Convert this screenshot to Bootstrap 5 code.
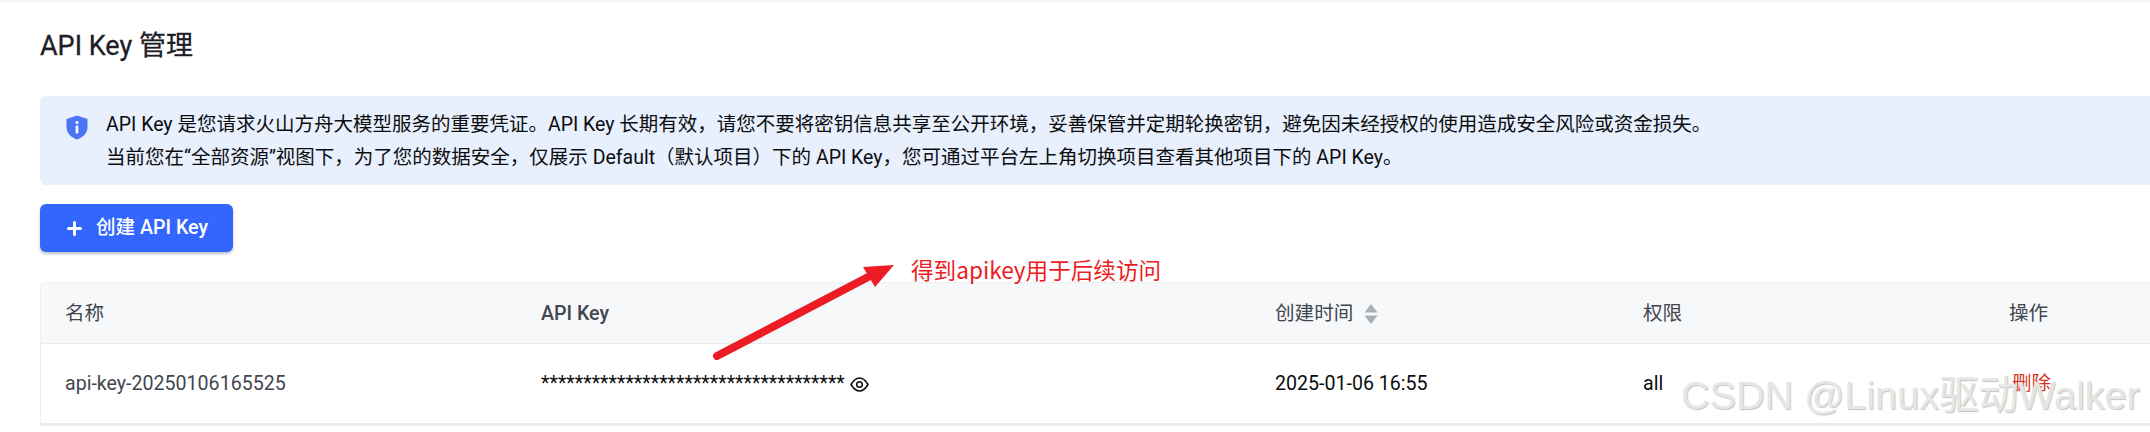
<!DOCTYPE html>
<html lang="zh-CN">
<head>
    <meta charset="UTF-8">
    <meta name="viewport" content="width=device-width, initial-scale=1.0">
    <title>API Key 管理</title>
    <link href="https://cdn.jsdelivr.net/npm/bootstrap@5.3.0/dist/css/bootstrap.min.css" rel="stylesheet">
    <style>
        html, body { height: 432px; overflow: hidden; }
        body { background: #fff; font-family: Roboto, "Noto Sans CJK SC", sans-serif; font-size: 19.6px; color: #0c0d0e; }
        .page-wrap { position: relative; height: 432px; padding: 0 0 0 40px; box-shadow: inset 0 4px 4px -3px #eeeff1; overflow: hidden; }
        .page-title { font-size: 27px; font-weight: 400; line-height: 32px; margin: 0; padding-top: 30px; height: 96px; color: #1c2026; -webkit-text-stroke: .3px #1c2026; }
        .key-alert { background: #e8effd; border: 0; border-radius: 6px 0 0 6px; margin: 0; height: 89px; padding: 12px 0 0 26px; line-height: 33px; color: #0c0d0e; white-space: nowrap; overflow: hidden; gap: 18px; font-size: 19.5px; }
        .key-alert svg { flex: none; margin-top: 7px; }
        .create-btn { width: 193px; height: 48px; margin-top: 19px; background: #3366ff; border: 0; border-radius: 6px; font-size: 19.6px; font-weight: 500; color: #fff; box-shadow: 0 2px 3px rgba(30, 50, 90, .3); gap: 14px; padding: 0 0 0 27px; }
        .key-table-wrap { margin-top: 30px; border: 1px solid #eceef1; border-right: 0; border-bottom: 0; border-top-left-radius: 6px; overflow: hidden; }
        .key-table { table-layout: fixed; width: 2110px; margin: 0; font-size: 19.6px; }
        .key-table th, .key-table td { padding: 0 0 0 24px; vertical-align: middle; border-bottom: 1px solid #e8ebef; }
        .key-table th { background: #f6f8fa; height: 60px; font-weight: 400; color: #42464e; padding-top: 2px; }
        .key-table th.key-head { font-weight: 500; }
        .key-table td { height: 81px; color: #0c0d0e; border-bottom-width: 3px; padding-top: 2px; }
        .key-table td.name-cell { color: #42464e; }
        .sort-icon { margin-left: 6px; vertical-align: -5px; }
        .eye-icon { vertical-align: -2px; }
        .del-link { color: #d7342a; text-decoration: none; padding-left: 3px; }
        .note-text { position: absolute; left: 911px; top: 253px; font-size: 22.6px; line-height: 34px; color: #ed1c24; font-family: "Noto Sans CJK SC", sans-serif; }
        .note-arrow { position: absolute; left: 700px; top: 250px; }
        .watermark { position: absolute; left: 1681px; top: 372px; font-family: "Liberation Sans", "Noto Sans CJK SC", sans-serif; font-size: 39.6px; line-height: 46px; color: #e6e6e6; text-shadow: 1px 1px 1px #c4c4c4; white-space: nowrap; }
    </style>
</head>
<body>
    <div class="page-wrap">
        <h1 class="page-title">API Key 管理</h1>

        <div class="alert key-alert d-flex">
            <svg width="22" height="25" viewBox="0 0 22 25">
                <path d="M11 0.5 L21.5 4 V12 C21.5 18.5 16.5 22.5 11 24.5 C5.5 22.5 0.5 18.5 0.5 12 V4 Z" fill="#4a76f5"/>
                <circle cx="11" cy="7.5" r="1.6" fill="#fff"/>
                <rect x="9.7" y="10.5" width="2.6" height="8" rx="1" fill="#fff"/>
            </svg>
            <div>
                API Key 是您请求火山方舟大模型服务的重要凭证。API Key 长期有效，请您不要将密钥信息共享至公开环境，妥善保管并定期轮换密钥，避免因未经授权的使用造成安全风险或资金损失。<br>
                当前您在“全部资源”视图下，为了您的数据安全，仅展示 Default（默认项目）下的 API Key，您可通过平台左上角切换项目查看其他项目下的 API Key。
            </div>
        </div>

        <button type="button" class="btn create-btn d-flex align-items-center">
            <svg width="15" height="15" viewBox="0 0 15 15"><path d="M7.5 1.5 V13.5 M1.5 7.5 H13.5" stroke="#fff" stroke-width="3" stroke-linecap="round"/></svg>
            创建 API Key
        </button>

        <div class="key-table-wrap">
            <table class="table key-table">
                <colgroup>
                    <col style="width: 476px">
                    <col style="width: 734px">
                    <col style="width: 368px">
                    <col style="width: 366px">
                    <col>
                </colgroup>
                <thead>
                    <tr>
                        <th>名称</th>
                        <th class="key-head">API Key</th>
                        <th>创建时间
                            <svg class="sort-icon" width="14" height="22" viewBox="0 0 14 22"><path d="M7 1 L13.5 9.5 H0.5 Z M7 21 L13.5 12.5 H0.5 Z" fill="#a9afb9"/></svg>
                        </th>
                        <th>权限</th>
                        <th>操作</th>
                    </tr>
                </thead>
                <tbody>
                    <tr>
                        <td class="name-cell">api-key-20250106165525</td>
                        <td>
                            <span>************************************</span>
                            <svg class="eye-icon" width="19" height="15" viewBox="0 0 19 15" fill="none" stroke="#0c0d0e" stroke-width="1.5">
                                <path d="M1 7.5 C4 2.5 7 1 9.5 1 C12 1 15 2.5 18 7.5 C15 12.5 12 14 9.5 14 C7 14 4 12.5 1 7.5 Z"/>
                                <circle cx="9.5" cy="7.5" r="2.8"/>
                            </svg>
                        </td>
                        <td>2025-01-06 16:55</td>
                        <td>all</td>
                        <td><a href="#" class="del-link">删除</a></td>
                    </tr>
                </tbody>
            </table>
        </div>

        <svg class="note-arrow" width="210" height="120" viewBox="700 250 210 120">
            <path d="M717 356 L872 275" stroke="#ed1c24" stroke-width="8" stroke-linecap="round"/>
            <path d="M894 265 L863 267 L875 287 Z" fill="#ed1c24"/>
        </svg>
        <div class="note-text">得到apikey用于后续访问</div>
        <div class="watermark">CSDN @Linux驱动Walker</div>
    </div>

    <script src="https://cdn.jsdelivr.net/npm/bootstrap@5.3.0/dist/js/bootstrap.bundle.min.js"></script>
</body>
</html>
